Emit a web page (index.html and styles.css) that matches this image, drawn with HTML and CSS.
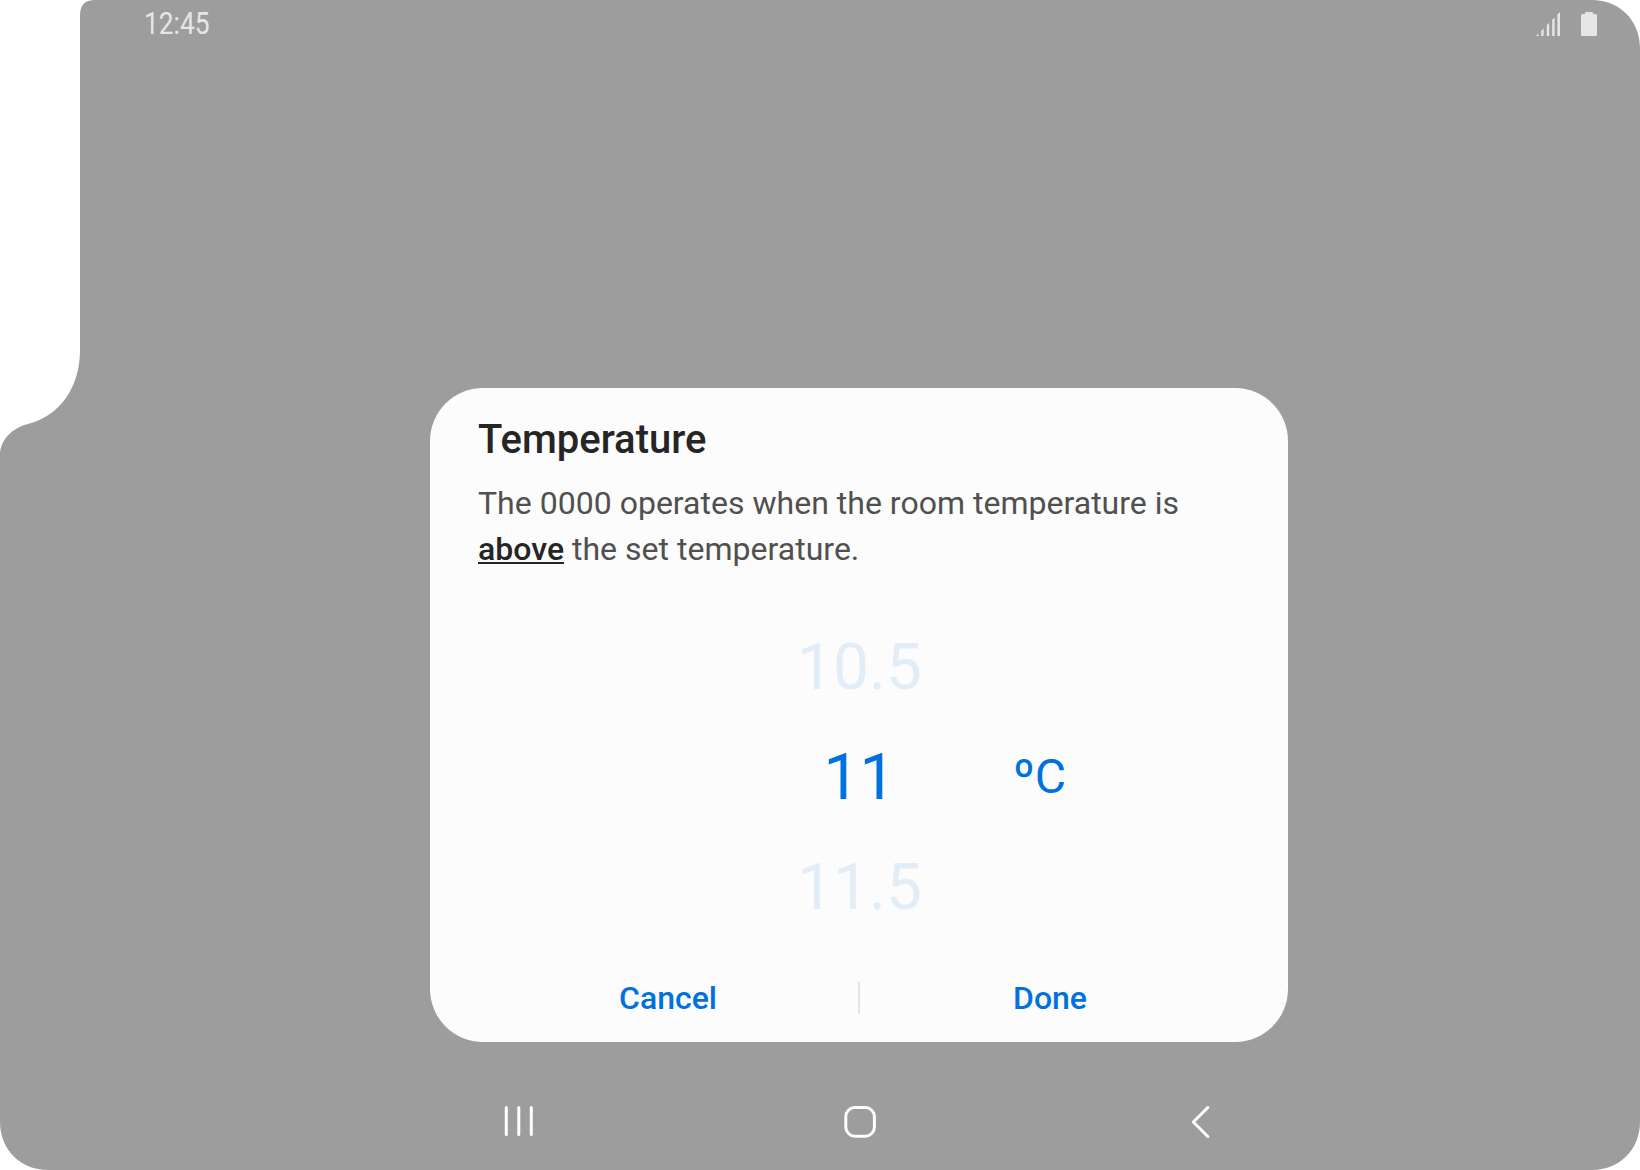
FILE: index.html
```html
<!DOCTYPE html>
<html lang="en">
<head>
<meta charset="utf-8">
<title>Temperature</title>
<link rel="stylesheet" href="styles.css">
</head>
<body>
<div class="screen">
  <header class="status-bar">
    <time class="clock">12:45</time>
    <div class="status-icons">
      <svg width="24" height="24" viewBox="0 0 24 24" aria-hidden="true">
        <path d="M0.3 24V23.7L2.5 21.5V24ZM5.2 24V18.8L7.6 16.4V24ZM10.8 24V13.2L13.2 10.8V24ZM16.2 24V7.8L18.6 5.4V24ZM21.4 24V2.6L24 0V24Z" fill="currentColor"/>
      </svg>
      <svg width="16" height="24" viewBox="0 0 16 24" aria-hidden="true">
        <path d="M5 0H11Q12 0 12 1V2H14.5Q16 2 16 3.5V22.5Q16 24 14.5 24H1.5Q0 24 0 22.5V3.5Q0 2 1.5 2H4V1Q4 0 5 0Z" fill="currentColor"/>
      </svg>
    </div>
  </header>
  <main class="dialog">
    <h1 class="title">Temperature</h1>
    <p class="message">The 0000 operates when the room temperature is <strong class="emphasis">above</strong> the set temperature.</p>
    <div class="picker">
      <div class="values">
        <span class="value faded">10.5</span>
        <span class="value">11</span>
        <span class="value faded">11.5</span>
      </div>
      <span class="unit">ºC</span>
    </div>
    <div class="actions">
      <button class="action">Cancel</button>
      <span class="divider"></span>
      <button class="action">Done</button>
    </div>
  </main>
  <nav class="nav-bar">
    <svg width="32" height="34" viewBox="0 0 32 34" fill="none" stroke="currentColor" stroke-width="3" stroke-linecap="round">
      <path d="M3.3 3.5V30.5M15.8 3.5V30.5M28.3 3.5V30.5"/>
    </svg>
    <svg width="32" height="34" viewBox="0 0 32 34" fill="none" stroke="currentColor" stroke-width="3">
      <rect x="1.8" y="3.6" width="28.6" height="28.6" rx="9"/>
    </svg>
    <svg width="32" height="34" viewBox="0 0 32 34" fill="none" stroke="currentColor" stroke-width="3" stroke-linecap="round" stroke-linejoin="round">
      <path d="M22.8 3.5L8.3 18L22.8 32.5"/>
    </svg>
  </nav>
</div>
</body>
</html>
```

FILE: styles.css
```css
* {
  box-sizing: border-box;
}

body {
  margin: 0;
  background: #fff;
  font-family: Roboto, sans-serif;
}

.screen {
  display: flex;
  flex-direction: column;
  width: 1640px;
  height: 1170px;
  background: #9d9d9d;
  clip-path: path("M80 15Q80 0 95 0H1592C1619 0 1640 20 1640 48V1122C1640 1150 1619 1170 1592 1170H48C21 1170 0 1150 0 1122V455C0 440 12 428 28 424C60 416 80 387 80 350Z");
}

.status-bar {
  display: flex;
  justify-content: space-between;
  align-items: center;
  height: 48px;
  padding: 0 43px 0 144px;
  color: #e6e6e6;
}

.clock {
  font-size: 31px;
  line-height: 48px;
  transform: scaleX(0.85);
  transform-origin: left;
}

.status-icons {
  display: flex;
  gap: 21px;
}

.dialog {
  width: 858px;
  height: 654px;
  margin: 340px 0 0 430px;
  padding: 29px 48px 0;
  border-radius: 53px;
  background: #fcfcfc;
}

.title {
  margin: 0;
  color: #252525;
  font-size: 40px;
  font-weight: 500;
  line-height: 46px;
}

.message {
  margin: 17px 0 0;
  color: #505050;
  font-size: 32px;
  line-height: 46px;
  letter-spacing: 0.015px;
}

.emphasis {
  color: #252525;
  font-weight: 500;
  text-decoration: underline;
  text-decoration-thickness: 2px;
  text-underline-offset: 2px;
  text-decoration-skip-ink: none;
}

.picker {
  display: grid;
  grid-template-columns: 1fr 130px 1fr;
  align-items: center;
  height: 330px;
  margin-top: 41px;
  color: #0072de;
}

.values {
  grid-column: 2;
  padding-left: 1px;
  text-align: center;
}

.value {
  display: block;
  font-size: 64px;
  line-height: 110px;
}

.faded {
  color: #e2edf8;
}

.unit {
  padding: 0 0 3px 89px;
  font-size: 48px;
}

.actions {
  display: flex;
  align-items: center;
  height: 64px;
  margin-top: 23px;
}

.action {
  flex: 1;
  padding: 0;
  border: 0;
  background: none;
  color: #0072de;
  font: 500 32px/64px Roboto, sans-serif;
}

.divider {
  width: 2px;
  height: 32px;
  background: #e4e4e4;
}

.nav-bar {
  display: flex;
  justify-content: space-between;
  width: 714px;
  margin: 62px 0 0 503px;
  color: #fff;
}
```
